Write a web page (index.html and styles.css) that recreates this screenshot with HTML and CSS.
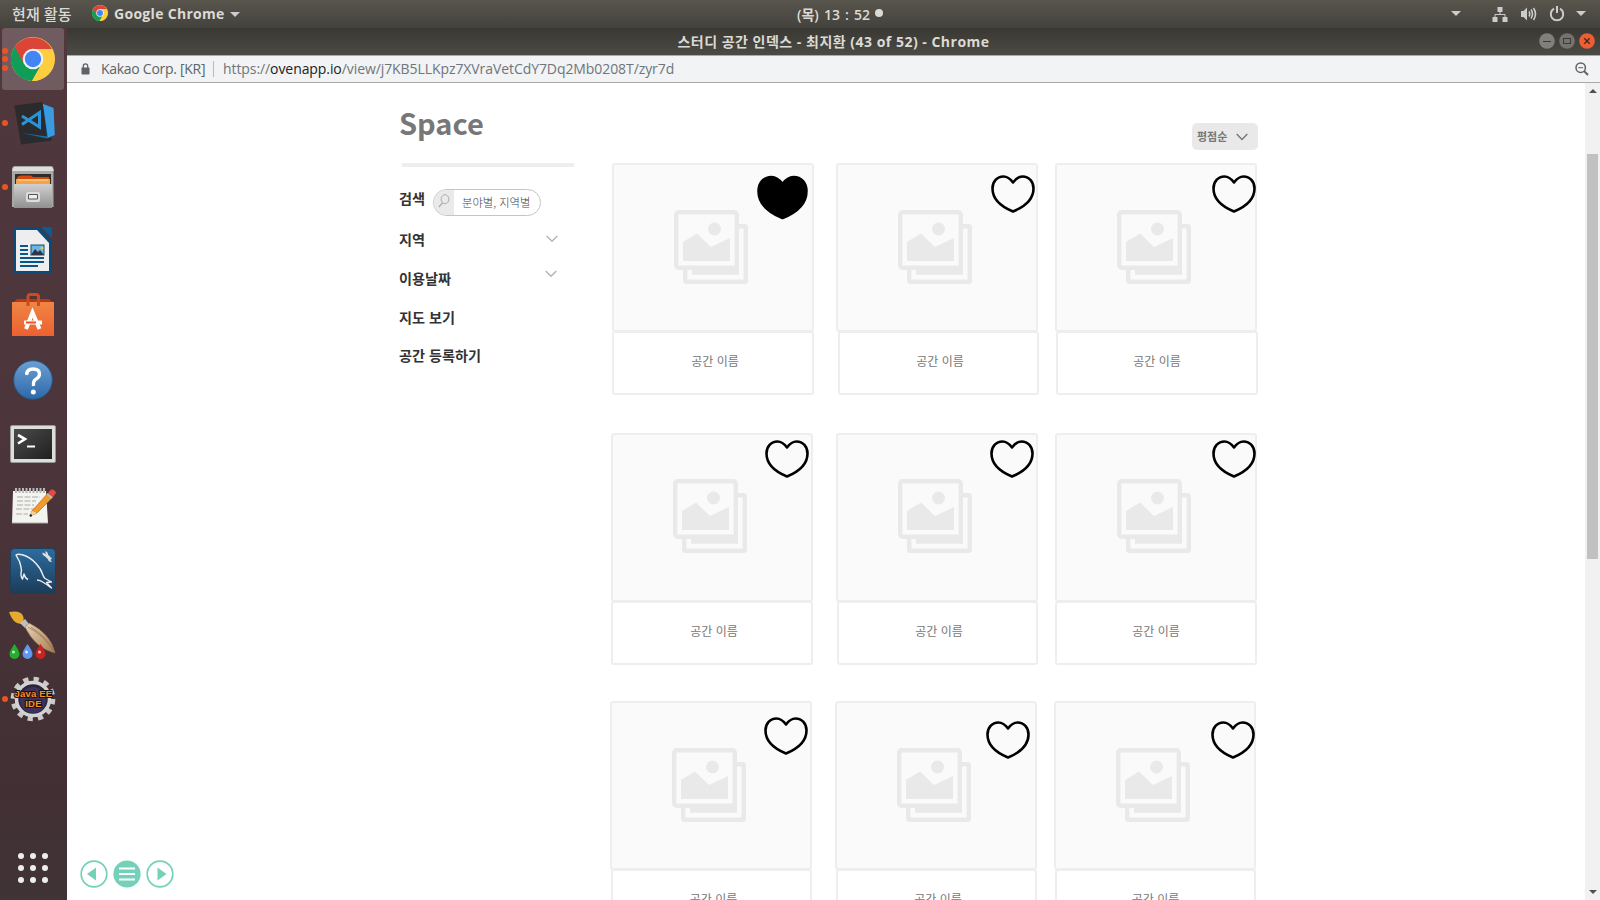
FILE: index.html
```html
<!DOCTYPE html>
<html lang="ko">
<head>
<meta charset="utf-8">
<title>스터디 공간 인덱스</title>
<link rel="stylesheet" href="styles.css">
</head>
<body>
<svg class="defs" width="0" height="0">
  <defs>
    <symbol id="picture" viewBox="0 0 74 74">
      <rect x="2.2" y="2.2" width="60.6" height="55.6" rx="2.5" fill="none" stroke="#e9e9e9" stroke-width="4.4"/>
      <path d="M9 32L23 23.5L37 37L56 28V51H9Z" fill="#e9e9e9"/>
      <circle cx="40.5" cy="19" r="6.5" fill="#e9e9e9"/>
      <path d="M65 14H70.500Q74 14 74 17.500V70.500Q74 74 70.500 74H12.500Q9 74 9 70.500V59H13.400V69.600H69.600V18.400H65Z" fill="#e9e9e9"/>
      <path d="M18 58H62L65 56V64.700H18Z" fill="#e9e9e9"/>
    </symbol>
    <symbol id="heart" viewBox="0 0 44 38">
      <path d="M22 7.500C19 3.500 16 1.500 12.500 1.500C6 1.500 1.500 6.500 1.500 13.500C1.500 25 11 32 22 36.500C33 32 42.500 25 42.500 13.500C42.500 6.500 38 1.500 31.500 1.500C28 1.500 25 3.500 22 7.500Z" stroke="#000" stroke-width="2.600" stroke-linejoin="round"/>
    </symbol>
    <symbol id="chrome" viewBox="0 0 44 44">
      <circle cx="22" cy="22" r="22" fill="#ffcd40"/>
      <path d="M22 22L12.500 27.500L3.200 10.500A22 22 0 0 1 41 12H22Z" fill="#db4437"/>
      <path d="M3.600 10A22 22 0 0 0 21 44L31 27L22 22L12.500 26Z" fill="#0f9d58"/>
      <path d="M22 12H41A22 22 0 0 1 21 44L31 26Z" fill="#ffcd40"/>
      <circle cx="22" cy="22" r="10.300" fill="#f1f1f1"/>
      <circle cx="22" cy="22" r="8.200" fill="#4285f4"/>
    </symbol>
    <linearGradient id="steel" x2="0" y2="1"><stop stop-color="#cfcfcf"/><stop offset="1" stop-color="#919191"/></linearGradient>
    <linearGradient id="bag" x2="0" y2="1"><stop stop-color="#ef8544"/><stop offset="1" stop-color="#ec6130"/></linearGradient>
    <linearGradient id="help" x2="0" y2="1"><stop stop-color="#6ca0d3"/><stop offset="1" stop-color="#2d68a8"/></linearGradient>
    <linearGradient id="dark" x2="1" y2="1"><stop stop-color="#4b4b4b"/><stop offset="1" stop-color="#202020"/></linearGradient>
    <linearGradient id="sea" x2="0" y2="1"><stop stop-color="#2d6c9f"/><stop offset="1" stop-color="#1b3c57"/></linearGradient>
    <linearGradient id="wood" x2="1" y2="1"><stop stop-color="#e7d3b4"/><stop offset="1" stop-color="#a67e54"/></linearGradient>
  </defs>
</svg>

<header class="topbar">
  <span class="activities">현재 활동</span>
  <svg class="mini-chrome"><use href="#chrome"/></svg>
  <span class="appname">Google Chrome</span>
  <i class="caret caret-app"></i>
  <span class="clock">(목) 13 : 52</span><i class="clock-dot"></i>
  <div class="tray">
    <i class="caret"></i>
    <svg width="16" height="16" viewBox="0 0 16 16" class="net"><path d="M5.500 1h5v5h-5zM.5 11h5v5h-5zM10.500 11h5v5h-5z" fill="#ccc"/><path d="M8 6v2.500M3 11V8.500H13V11" fill="none" stroke="#ccc"/></svg>
    <svg width="17" height="16" viewBox="0 0 17 16" class="vol"><path d="M1 5h2.500L7 1.500v13L3.500 11H1z" fill="#ccc"/><path d="M9 5.500q1.500 2.500 0 5M11 3.500q3 4.500 0 9M13.500 2q4 6 0 12" fill="none" stroke="#ccc" stroke-width="1.600"/></svg>
    <svg width="16" height="16" viewBox="0 0 16 16" class="pow"><path d="M5 2.700A6.200 6.200 0 1 0 11 2.700" fill="none" stroke="#ccc" stroke-width="2"/><path d="M8 0v7" stroke="#ccc" stroke-width="2"/></svg>
    <i class="caret"></i>
  </div>
</header>

<div class="desktop">
  <nav class="launcher">
    <div class="slot flat active"><span class="dots"><i></i><i></i><i></i></span><svg width="44" height="44"><use href="#chrome"/></svg></div>
    <div class="slot"><span class="dots"><i></i></span><svg width="46" height="46" viewBox="0 0 46 46"><path d="M4.300 4.500L32 1L42 39.500L11 43.500Z" fill="#2b2b2d"/><path d="M12 32L37 35.500L33 3L43.500 7L44.700 34L37.300 37.500Z" fill="#1272b8"/><path d="M33 3L43.500 7L44.700 34L38 36.500Z" fill="#3a9be0"/><path d="M12 15L29.500 26V11.500L12 23.500" fill="none" stroke="#2b93d8" stroke-width="3"/></svg></div>
    <div class="slot"><span class="dots"><i></i></span><svg width="44" height="46" viewBox="0 0 44 46"><path d="M2 2Q2 1 4 1H40Q42 1 42.500 3V42H1V3Z" fill="#a9a9a7"/><path d="M3 2H41L43 6H1Z" fill="#dededc"/><path d="M4 9H40V20H4Z" fill="#302c28"/><path d="M6 12L10 10.500H20L22 12H38V19H6Z" fill="#d8480e"/><path d="M5 14H39V19H5Z" fill="#f4a345"/><path d="M7 15H37" stroke="#ffe0a0"/><path d="M3 19H41V43H3Z" fill="url(#steel)"/><rect x="15" y="27" width="14" height="10" rx="2" fill="#ddd"/><path d="M17.500 29.500H26.500V34H17.500Z" fill="#eee" stroke="#555"/></svg></div>
    <div class="slot flat"><svg width="42" height="50" viewBox="0 0 42 50"><path d="M4 1H27L40 15V45Q40 48 37 48H4Q1 48 1 45V4Q1 1 4 1Z" fill="#0b4a79"/><path d="M29 1H38Q40 1 40 3V12Z" fill="#0b5c94"/><path d="M4 4H25L37 17V45H4Z" fill="#eee"/><path d="M8 20h8M8 24h8M8 28h8M8 32h24M8 36h24M8 40h18" stroke="#0b5688" stroke-width="1.800"/><rect x="19" y="19" width="13" height="10" fill="#6bb6e0" stroke="#135078"/><path d="M19 29l4-6 3 3 2-2 4 5z" fill="#334"/><circle cx="30" cy="22" r="1.500" fill="#ec4"/></svg></div>
    <div class="slot flat"><svg width="42" height="46" viewBox="0 0 42 46"><path d="M2 10L5 7H37L40 10Z" fill="#b63a12"/><path d="M0 10H42V44H0Z" fill="url(#bag)"/><path d="M16 14V5Q16 2.500 18.500 2.500H24Q26.500 2.500 26.500 5V14" fill="none" stroke="#cf4a1c" stroke-width="3"/><path d="M14 37L20.500 20.500L27.500 37" fill="none" stroke="#fff" stroke-width="4"/><path d="M12 28.500H30V32.500H12Z" fill="#fff"/><path d="M14 30.500H24" stroke="#e95420" stroke-width="2"/></svg></div>
    <div class="slot low"><svg width="40" height="40" viewBox="0 0 40 40"><circle cx="20" cy="20" r="19.300" fill="url(#help)" stroke="#285988"/><path d="M13.500 14.500Q14 9 20 9Q26.500 9 26.500 14Q26.500 17.500 22.500 19.500Q20 21 20.500 26" fill="none" stroke="#fff" stroke-width="3.300"/><circle cx="13.800" cy="13.500" r="1.700" fill="#fff"/><circle cx="20.300" cy="32" r="2.500" fill="#fff"/></svg></div>
    <div class="slot low"><svg width="46" height="38" viewBox="0 0 46 38"><rect x=".5" y=".5" width="45" height="37" rx="1.500" fill="#ddd" stroke="#999"/><path d="M4 4H42V34H4Z" fill="url(#dark)"/><path d="M8 10L15 14L8 18.500" fill="none" stroke="#fff" stroke-width="2.600"/><path d="M17 21.500H25" stroke="#fff" stroke-width="2"/></svg></div>
    <div class="slot high"><svg width="46" height="38" viewBox="0 0 46 38"><path d="M3 4H36L38 36H2Z" fill="#f3f3f0"/><path d="M2 36H38" stroke="#aaa"/><path d="M6 1v5M9.500 1v5M13 1v5M16.500 1v5M20 1v5M23.500 1v5M27 1v5M30.500 1v5M34 1v5" stroke="#b8b8b8" stroke-width="2"/><path d="M7 10H30M7 14H26M7 18H24M6 22H28M6 27H18" stroke="#aaa" stroke-dasharray="6 1.500"/><path d="M22 24L38 6L43 10L27 26L20 29Z" fill="#f29a2c" stroke="#be6714" stroke-width=".7"/><path d="M22 24L27 26L20 29Z" fill="#efd6a5"/><path d="M38 6L41 2.500Q45 2 46 6L43 10Z" fill="#de4b4b"/><path d="M37 7L42 11" stroke="#bbb" stroke-width="2"/><circle cx="20.800" cy="28.500" r="1.200" fill="#222"/></svg></div>
    <div class="slot flat"><svg width="46" height="46" viewBox="0 0 46 46"><rect x=".5" y=".5" width="45" height="45" rx="4" fill="url(#sea)" stroke="#1b3f5d"/><path d="M18 31.500Q15 30 14 26L12.500 31Q10 28 11.500 22.500Q11 18 9.500 13.500Q7.500 10 6 7Q8 5.500 13 7Q20 9 26 15.500Q31 21 32.500 26Q33.500 29 35 30.500L41.500 34L36.500 34.500L41.500 40Q36 36 33.500 34.500Q30 32 27 32" fill="none" stroke="#e8eef3" stroke-width="1.400" stroke-linejoin="round"/><path d="M35.500 6.500L39.500 10.500" stroke="#ddd" stroke-width="3.200"/><path d="M32.500 4.500Q32 8 36 8.500L38 7Q38 3 35 3.500L36 6Z" fill="#ddd"/><path d="M38 11Q38 14 42 14L40.500 12L42 10L39 9Z" fill="#ddd"/></svg></div>
    <div class="slot flat"><svg width="48" height="50" viewBox="0 0 48 50"><path d="M0 2Q12 0 14 6Q16 10 12 14Q4 14 0 2Z" fill="#e7aa30"/><path d="M11 13L16 9L20 14L16 18Z" fill="#bfbfbf"/><path d="M16 17L20 13Q42 24 46 43Q26 38 16 17Z" fill="url(#wood)" stroke="#8f6d49" stroke-width=".6"/><path d="M19 17Q36 26 44 41M22 17Q39 28 45 41" fill="none" stroke="#95704a" stroke-width=".7"/><path d="M5.500 34Q10.500 41 10.500 44A5 5 0 0 1 .5 44Q.5 41 5.500 34Z" fill="#25ad2d"/><path d="M18.500 34Q23.500 41 23.500 44A5 5 0 0 1 13.500 44Q13.500 41 18.500 34Z" fill="#5f97ee"/><path d="M31.500 34Q36.500 41 36.500 44A5 5 0 0 1 26.500 44Q26.500 41 31.500 34Z" fill="#c82222"/><circle cx="4.500" cy="42" r="1.500" fill="#baf0b5"/><circle cx="17.500" cy="42" r="1.500" fill="#dcecff"/><circle cx="30.500" cy="42" r="1.500" fill="#ffb8b8"/></svg></div>
    <div class="slot flat"><span class="dots"><i></i></span><svg width="46" height="46" viewBox="0 0 46 46"><circle cx="23" cy="23" r="19.800" fill="none" stroke="#c9c9c9" stroke-width="5" stroke-dasharray="5.200 5.167"/><circle cx="23" cy="23" r="16.500" fill="#2b2340" stroke="#d2d2d2" stroke-width="3.500"/><circle cx="23" cy="24" r="13" fill="#4a3c6c" opacity=".6"/><text x="23.500" y="20.500" class="ide">Java EE</text><text x="23.500" y="30.500" class="ide">IDE</text></svg></div>
    <div class="apps"><i></i><i></i><i></i><i></i><i></i><i></i><i></i><i></i><i></i></div>
  </nav>

  <section class="window">
    <div class="titlebar"><span class="title">스터디 공간 인덱스 - 최지환 (43 of 52) - Chrome</span>
      <div class="winbtns">
        <svg width="16" height="16" viewBox="0 0 16 16"><circle cx="8" cy="8" r="7.800" fill="#81807a"/><path d="M4 8.500H12" stroke="#3b3a36"/></svg>
        <svg width="16" height="16" viewBox="0 0 16 16"><circle cx="8" cy="8" r="7.800" fill="#74736d"/><rect x="4.500" y="5.500" width="7" height="5" fill="none" stroke="#3b3a36"/></svg>
        <svg width="16" height="16" viewBox="0 0 16 16"><circle cx="8" cy="8" r="7.800" fill="#ec5f35"/><path d="M5.300 5.300L10.700 10.700M10.700 5.300L5.300 10.700" stroke="#45291e" stroke-width="1.400"/></svg>
      </div>
    </div>
    <div class="addressbar">
      <svg width="9" height="12" viewBox="0 0 9 12"><rect x=".5" y="4.500" width="8" height="7" rx=".7" fill="#5f6368"/><path d="M2.300 5V3A2.200 2.200 0 0 1 6.700 3V5" fill="none" stroke="#5f6368" stroke-width="1.300"/></svg>
      <span class="org">Kakao Corp. [KR]</span><i class="sep"></i>
      <span class="url">https://<b>ovenapp.io</b>/view/j7KB5LLKpz7XVraVetCdY7Dq2Mb0208T/zyr7d</span>
      <svg class="zoom" width="14" height="14" viewBox="0 0 14 14"><circle cx="5.700" cy="5.700" r="4.700" fill="none" stroke="#5f6368" stroke-width="1.500"/><path d="M3.300 5.700H8.100" stroke="#5f6368"/><path d="M9 9L13 13" stroke="#5f6368" stroke-width="2"/></svg>
    </div>

    <div class="viewport">
      <main class="page">
        <aside class="side">
          <h1>Space</h1>
          <hr>
          <div class="row search-row"><span class="search-label">검색</span>
            <div class="search"><div class="search-icon"><svg width="12" height="14" viewBox="0 0 12 14"><ellipse cx="7" cy="5.200" rx="3.900" ry="4.500" fill="none" stroke="#aaa"/><path d="M4.500 9L.8 13" stroke="#aaa" stroke-width="1.200"/></svg></div><span>분야별, 지역별</span></div>
          </div>
          <div class="row"><span>지역</span><svg class="chev" width="12" height="8" viewBox="0 0 12 8"><path d="M.7 1L6 6.300L11.300 1" fill="none" stroke="#b5b5b5" stroke-width="1.500"/></svg></div>
          <div class="row"><span>이용날짜</span><svg class="chev chev-date" width="12" height="8" viewBox="0 0 12 8"><path d="M.7 1L6 6.300L11.300 1" fill="none" stroke="#b5b5b5" stroke-width="1.500"/></svg></div>
          <div class="row">지도 보기</div>
          <div class="row last">공간 등록하기</div>
        </aside>
        <div class="listing">
          <div class="sort"><span>평점순</span><svg width="12" height="8" viewBox="0 0 12 8"><path d="M.7 1L6 6.500L11.300 1" fill="none" stroke="#777" stroke-width="1.400"/></svg></div>
          <div class="cards">
            <article class="card a1"><div class="photo"><svg class="pic"><use href="#picture"/></svg></div><div class="info">공간 이름</div><svg class="heart full"><use href="#heart"/></svg></article>
            <article class="card a2"><div class="photo"><svg class="pic"><use href="#picture"/></svg></div><div class="info">공간 이름</div><svg class="heart"><use href="#heart"/></svg></article>
            <article class="card a3"><div class="photo"><svg class="pic"><use href="#picture"/></svg></div><div class="info">공간 이름</div><svg class="heart"><use href="#heart"/></svg></article>
            <article class="card b1"><div class="photo"><svg class="pic"><use href="#picture"/></svg></div><div class="info">공간 이름</div><svg class="heart"><use href="#heart"/></svg></article>
            <article class="card b2"><div class="photo"><svg class="pic"><use href="#picture"/></svg></div><div class="info">공간 이름</div><svg class="heart"><use href="#heart"/></svg></article>
            <article class="card b3"><div class="photo"><svg class="pic"><use href="#picture"/></svg></div><div class="info">공간 이름</div><svg class="heart"><use href="#heart"/></svg></article>
            <article class="card c1"><div class="photo"><svg class="pic"><use href="#picture"/></svg></div><div class="info">공간 이름</div><svg class="heart"><use href="#heart"/></svg></article>
            <article class="card c2"><div class="photo"><svg class="pic"><use href="#picture"/></svg></div><div class="info">공간 이름</div><svg class="heart"><use href="#heart"/></svg></article>
            <article class="card c3"><div class="photo"><svg class="pic"><use href="#picture"/></svg></div><div class="info">공간 이름</div><svg class="heart"><use href="#heart"/></svg></article>
          </div>
        </div>
      </main>
      <div class="scrollbar"><i class="up"></i><div class="thumb"></div><i class="down"></i></div>
      <div class="pager">
        <svg width="28" height="28" viewBox="0 0 28 28"><circle cx="14" cy="14" r="12.800" fill="#fff" stroke="#74d1b9" stroke-width="1.700"/><path d="M7 14L16 7.500V20.500Z" fill="#74d1b9"/></svg>
        <svg width="28" height="28" viewBox="0 0 28 28"><circle cx="14" cy="14" r="13.600" fill="#74d1b9"/><path d="M6 8.500H22M6 14H22M6 19.500H22" stroke="#fff" stroke-width="2"/></svg>
        <svg width="28" height="28" viewBox="0 0 28 28"><circle cx="14" cy="14" r="12.800" fill="#fff" stroke="#74d1b9" stroke-width="1.700"/><path d="M20.500 14L11.500 7.500V20.500Z" fill="#74d1b9"/></svg>
      </div>
    </div>
  </section>
</div>
</body>
</html>
```
FILE: styles.css
```css
* { box-sizing: border-box; }
body { margin: 0; width: 1600px; height: 900px; overflow: hidden; background: #fff; font-family: "Noto Sans CJK KR", sans-serif; }
svg { display: block; flex: none; }
.defs { position: absolute; }

/* desktop top panel */
.topbar { height: 28px; display: flex; align-items: center; background: linear-gradient(#58554d, #43423c); color: #dcdad5; font: bold 14px/28px "Open Sans", "Noto Sans CJK KR", sans-serif; white-space: nowrap; }
.activities { width: 80px; padding-left: 12px; font-weight: 500; font-size: 15px; letter-spacing: .1px; }
.mini-chrome { width: 16px; height: 16px; margin-left: 12px; margin-bottom: 2px; }
.appname { width: 112px; margin-left: 6px; letter-spacing: .3px; }
.caret { width: 0; height: 0; border: 5px solid transparent; border-top-color: #ccc; border-bottom: 0; }
.caret-app { margin-left: 4px; }
.clock { margin-left: 557px; width: 78px; padding-top: 1px; word-spacing: 1.500px; font-weight: 600; }
.clock-dot { width: 8px; height: 8px; border-radius: 50%; background: #dcdad5; margin-bottom: 2px; }
.tray { margin-left: auto; padding-right: 14px; display: flex; align-items: center; margin-bottom: 1px; }
.net { margin-left: 31px; margin-right: 12px; }
.vol { margin-right: 12px; }
.pow { margin-right: 11px; }

.desktop { display: flex; height: 872px; }

/* launcher */
.launcher { width: 67px; flex: none; display: flex; flex-direction: column; gap: 2px; padding-left: 2px; background: linear-gradient(#50383d, #4b353b 50%, #412f33 88%, #403436); }
.slot { position: relative; width: 62px; height: 62px; flex: none; display: flex; align-items: center; justify-content: center; }
.slot svg { margin-top: 1px; }
.slot.flat svg { margin-top: 0; }
.slot.low svg { margin-top: 2px; }
.slot.high svg { margin-top: -2px; }
.active { background: #705c60; border-radius: 3px; }
.dots { position: absolute; left: 0; top: 0; height: 62px; display: flex; flex-direction: column; justify-content: center; gap: 2.500px; }
.dots i { width: 6px; height: 6px; border-radius: 50%; background: #e95420; }
.ide { font: bold 9.500px "Liberation Sans", sans-serif; letter-spacing: .2px; fill: #ff8a2a; stroke: #1c1208; stroke-width: 2px; paint-order: stroke; text-anchor: middle; }
.apps { margin: auto 0 17px 16px; width: 30px; display: grid; grid-template-columns: 6px 6px 6px; gap: 6px; }
.apps i { width: 6px; height: 6px; border-radius: 50%; background: #eee; }

/* browser window */
.window { flex: 1; display: flex; flex-direction: column; }
.titlebar { position: relative; height: 27px; flex: none; display: flex; justify-content: center; background: linear-gradient(#393833, #4c4a44); color: #dcdad5; font: bold 14px/28px "Open Sans", "Noto Sans CJK KR", sans-serif; }
.title { white-space: nowrap; letter-spacing: .5px; }
.winbtns { position: absolute; right: 5px; top: 5px; display: flex; gap: 4px; }
.addressbar { height: 28px; flex: none; display: flex; align-items: center; padding-left: 14px; background: #f1f3f4; border-top: 1px solid #aaa; border-bottom: 1px solid #aaa; color: #5f6368; font: 14px/26px "Open Sans", sans-serif; white-space: nowrap; }
.org { width: 104px; margin-left: 11px; letter-spacing: -.28px; }
.sep { width: 1px; height: 16px; margin: 0 9px 0 8px; background: #bbb; }
.url { color: #70757a; letter-spacing: -.08px; }
.url b { font-weight: 400; color: #202124; }
.zoom { margin: 0 11px 0 auto; }

.viewport { position: relative; flex: 1; display: flex; overflow: hidden; background: #fff; }
.page { flex: 1; display: flex; padding-left: 332px; height: 817px; overflow: hidden; }
.side { width: 212px; flex: none; color: #333; }
h1 { margin: 0; padding-top: 17px; height: 80px; font-size: 29px; line-height: 44px; font-weight: 700; color: #777; }
hr { margin: 0 0 0 3px; width: 172px; height: 4px; border: 0; background: #eee; }
.row { height: 39px; display: flex; align-items: center; font-size: 14.150px; font-weight: 700; line-height: 20px; }
.search-row { margin-top: 12px; height: 40px; }
.search-label { margin-bottom: 2px; }
.search { width: 108px; height: 27px; margin: 6px 0 0 8px; display: flex; align-items: center; border: 1px solid #c4c4c4; border-radius: 14px; overflow: hidden; font-size: 11.300px; line-height: 24px; font-weight: 300; color: #444; white-space: nowrap; }
.search-icon { width: 20px; height: 26px; margin-right: 8px; padding: 5px 0 0 4px; background: #eaeaea; }
.chev { margin: 1px 0 0 121px; }
.chev-date { margin: -7px 0 0 94px; }
.last { height: 37px; }

.listing { padding-top: 40px; }
.sort { width: 66px; height: 27px; margin-left: 581px; padding: 0 10px 0 5px; display: flex; align-items: center; justify-content: space-between; border-radius: 5px; background: #e9e9e9; color: #777; font-size: 11px; font-weight: 700; line-height: 27px; }
.cards { margin-top: 13px; display: grid; grid-template-columns: 225px 219px 203px; grid-template-rows: 270px 268px 270px; }
.card { position: relative; margin-left: var(--x, 0); }
.photo { width: 202px; height: 169px; border: 2px solid #eee; border-radius: 3px; background: #fafafa; padding: var(--py, 45px) 0 0 60px; }
.pic { width: 74px; height: 74px; }
.info { width: calc(202px - var(--cut, 0px)); height: 64px; margin: -1px 0 0 var(--i, 0); border: 2px solid #eee; border-radius: 3px; padding-left: var(--t, 0); text-align: center; font-size: 12px; line-height: 56px; color: #777; }
.heart { position: absolute; left: var(--hx); top: var(--hy); width: 44px; height: 38px; fill: none; }
.full { width: 51px; height: 45px; fill: #000; }
.a1, .b1, .c1 { --t: 4px; }
.a2, .b2, .c2 { --t: 3px; }
.a1 { --x: 1px; --hx: 145px; --hy: 12px; }
.a2 { --i: 2px; --cut: 1px; --hx: 155px; --hy: 11.500px; }
.a3 { --i: 1px; --hx: 157px; --hy: 11.500px; }
.b1, .b2, .b3 { --py: 44px; --hy: 6.500px; }
.b1 { --hx: 154px; }
.b2 { --i: 1px; --cut: 1px; --hx: 154px; }
.b3 { --hx: 157px; }
.c1, .c2, .c3 { --x: -1px; --i: 1px; --cut: 1px; }
.c1 { --hx: 154px; --hy: 16px; }
.c2 { --hx: 151px; --hy: 19.500px; }
.c3 { --hx: 157px; --hy: 19.500px; }

.scrollbar { width: 15px; background: #f1f1f1; display: flex; flex-direction: column; align-items: center; }
.up, .down { width: 0; height: 0; border: 4px solid transparent; }
.up { margin-top: 6px; border-top: 0; border-bottom-color: #505050; }
.down { margin: auto 0 6px; border-bottom: 0; border-top-color: #505050; }
.thumb { width: 11px; height: 405px; margin-top: 61px; background: #c1c1c1; }
.pager { position: absolute; left: 13px; bottom: 12px; display: flex; gap: 5px; }
```
